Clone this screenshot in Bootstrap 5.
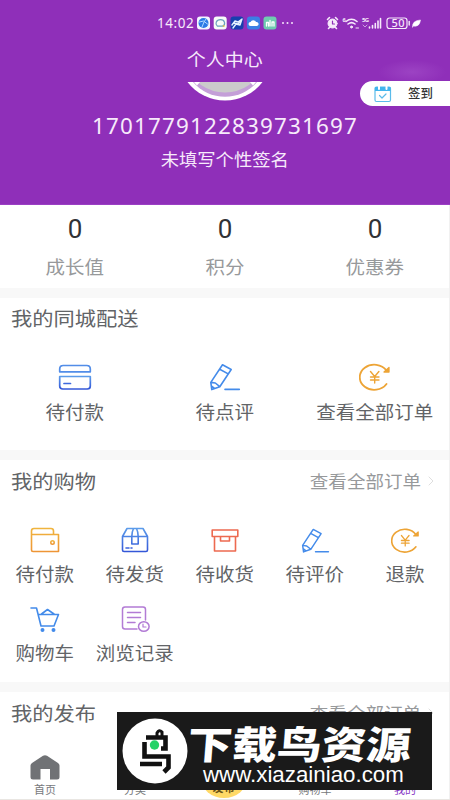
<!DOCTYPE html>
<html lang="zh-CN">
<head>
<meta charset="utf-8">
<meta name="viewport" content="width=device-width, initial-scale=1">
<title>个人中心</title>
<link rel="stylesheet" href="https://cdn.jsdelivr.net/npm/bootstrap@5.3.0/dist/css/bootstrap.min.css">
<style>
body{font-family:"Noto Sans","Noto Sans CJK SC",sans-serif;color:#626467;background:#fff}
.screen{width:450px;height:800px}
.cjk{font-family:"Noto Sans CJK SC",sans-serif}
svg{display:block;fill:none;stroke-linecap:round;stroke-linejoin:round;flex:none}
.wide{display:inline-block;white-space:nowrap;line-height:20px;transform:scaleX(1.09)}
.from-start{transform-origin:left}
.from-end{transform-origin:right}
.hero{height:205px;background:radial-gradient(ellipse 34px 12px at 412px 72px,#9c43c3,#8f2fb9);color:#f7eafb;border-bottom:1px solid #9b3fc4}
.status{height:44px;padding:1px 28px 0 157px}
.clock{font-size:13.5px;letter-spacing:.55px;line-height:20px;width:40px}
.page-title{font-size:17.4px;height:30px}
.avatar{margin-top:8px}
.uid{font-family:"Noto Sans",sans-serif;font-size:22.4px;letter-spacing:1.2px;line-height:30px;margin-top:10px}
.sign{font-size:16.8px;margin-top:8px}
.checkin{right:0;top:81px;width:90px;height:25px;border-radius:13px 0 0 13px;background:#fff;color:#333;padding-left:14px;font-size:12.4px;font-weight:500}
.stats{height:83px;padding-top:9px}
.count{font-family:Roboto,sans-serif;font-size:26px;line-height:30px;color:#303235}
.caption{font-size:17.9px}
.stats .caption{color:#97999b;margin-top:12px}
.gapbar{height:10px;background:#f8f8f8}
.sec-local{height:152px;padding-top:10px}
.heading{font-size:19.5px}
.sec-shop{height:222px;padding-top:11px}
.sec-post{padding-top:11px}
.head-row{padding:0 15px 0 11px;height:20px}
.more{font-size:17px;color:#97999b;margin-right:6px}
.local-row{padding-top:35px}
.local-row svg{margin-bottom:10px}
.shop-grid{padding-top:36px}
.shop-cell{width:90px;height:79px}
.shop-cell svg{margin-bottom:9px}
.tabs{left:0;bottom:0;height:56px;background:#fff;border-bottom:1px solid #e9e6e2;font-size:11px;line-height:14px;color:#77797c}
.tabs .tab{width:90px;padding-bottom:3px}
.tabs svg{margin-bottom:2px}
.hot{width:46px;height:40px;border-radius:50%;background:#ffd966;color:#6b5316;font-weight:700;margin-bottom:1px;padding-bottom:4px;margin-right:3px}
.mine{color:#8737c4}
.brandmark{left:117px;top:712px;width:315px;height:78px;background:#1a1a1a;color:#fff;padding-left:5px}
.brand-name{font-size:38.5px;font-weight:900;line-height:40px;transform:scaleX(1.16) skewX(-4deg);transform-origin:left;white-space:nowrap;margin-top:7px}
.brand-url{font-family:"Liberation Sans",sans-serif;font-size:22.3px;line-height:24px;margin:1px 0 0 15px}
.edge{right:0;top:205px;width:1px;height:594px;background:#f1f1f1}
</style>
</head>
<body>
<svg width="0" height="0" class="position-absolute">
<defs>
<linearGradient id="blue" x1="0" y1="0" x2="0" y2="1"><stop stop-color="#5b9bea"/><stop offset="1" stop-color="#3457d8"/></linearGradient>
<linearGradient id="gold" x1="0" y1="0" x2="0" y2="1"><stop stop-color="#f0b43e"/><stop offset="1" stop-color="#ee9535"/></linearGradient>
<symbol id="refund" viewBox="0 0 32 28"><path d="M27.500 21A14.500 12.600 0 1 1 27.500 7.500" stroke="#eda436" stroke-width="1.800"/><path d="M30 4.500V9H25z" fill="#eda436" stroke="#eda436" stroke-width="1.300"/><path d="M11.500 8.500l4.200 5 4.200-5M15.700 13.500V20M11.500 14H20M11.500 17H20" stroke="#eda436" stroke-width="1.400"/></symbol>
<symbol id="pen" viewBox="0 0 32 28"><path d="M13.500 1.800l8.700 4.700L10.800 23.700 2.800 26.600 1.800 19.400zM10.700 6.200l8.500 4.700M1.800 19.400l4.500.6 4.500 3.700M2.300 23l3.200 2.500M16 26.400h14.300" stroke="#448bea" stroke-width="1.600"/></symbol>
</defs>
</svg>
<main class="screen position-relative overflow-hidden">
<header class="hero position-relative">
  <div class="status d-flex align-items-center">
    <span class="clock">14:02</span>
    <svg width="98" height="14" viewBox="0 0 98 14">
      <rect x="0" y=".5" width="13" height="13" rx="3" fill="#f3f6ff"/><circle cx="6.500" cy="7" r="5" fill="#2b7be6"/><path d="M2.500 6l4-1 4 3M5 11l2-5 2-3" stroke="#b2d8ff"/>
      <rect x="16.700" y=".5" width="13" height="13" rx="3" fill="#f7fbf8"/><path d="M20 9.700c-2-2-1-6 3.500-6s5.500 5 2 6.500h-5" stroke="#6aa1bd" stroke-width="1.200"/><circle cx="26.700" cy="10" r="1" fill="#d4bd52"/>
      <rect x="33.500" y=".5" width="13" height="13" rx="3" fill="#183fae"/><path d="M35 9l3-4 3 1 4-3-2 6-4-1-3 4M37 7l4 1 3-3" stroke="#e5f1ff" stroke-width="1.400"/>
      <rect x="50" y=".5" width="13" height="13" rx="3" fill="#3c7fe4"/><path d="M53.500 10a2 2 0 010-4 3 3 0 015.500 0 2 2 0 011 4z" fill="#fff"/>
      <rect x="66.500" y=".5" width="13" height="13" rx="3" fill="#6fcbb0"/><path d="M69.500 10V6.500h2V10M73 10V4.500M75 10V6h2v4" stroke="#fff" stroke-width="1.300"/>
      <g fill="#f4e5fa"><circle cx="86" cy="7" r="1"/><circle cx="90.500" cy="7" r="1"/><circle cx="95" cy="7" r="1"/></g>
    </svg>
    <svg class="ms-auto" width="96" height="14" viewBox="0 0 96 14" stroke="#f6e9fb">
      <circle cx="6.500" cy="7.500" r="4.500" fill="#f6e9fb"/><path d="M1.500 3.500l2-2M9.500 1.500l2 2M2.500 12.500l1-1M10.500 12.500l-1-1" stroke-width="1.600"/><path d="M6.500 5v3h2" stroke="#8f2fb9" stroke-width="1.200"/>
      <path d="M20 5.500q5.500-4.500 11 0M22 8q3.500-2.800 7 0" stroke-width="1.600"/><circle cx="25.500" cy="11" r="1" fill="#f6e9fb"/><path d="M30 12h2.500" stroke-width="1"/>
      <g fill="#f6e9fb" stroke="none" font-family="Noto Sans" font-weight="700"><text x="16.500" y="5.500" font-size="5.500">6</text><text x="36" y="6" font-size="6" textLength="7">5G</text><text x="65.500" y="11.300" font-size="11" textLength="13" font-weight="500">50</text></g>
      <path d="M43.500 11v1M46.500 9.500V12M49.300 7.500V12M52 5V12M54.500 2.500V12" stroke-width="1.600"/><path d="M37 9l2 2 2-2" stroke-width=".6"/>
      <rect x="61" y="2" width="20" height="10.500" rx="2.500" stroke-width="1.200"/><path d="M83.200 5.500v3.500" stroke-width="1.400"/>
      <path d="M86.500 11q-.5-6.500 8-7-1 7.500-7 6z" fill="#fff" stroke-width=".6"/>
    </svg>
  </div>
  <div class="d-flex flex-column align-items-center cjk">
    <div class="page-title d-flex align-items-center"><span class="wide">个人中心</span></div>
    <svg class="avatar" width="76" height="19" viewBox="0 0 76 19"><path d="M.5 0H75.500A46 44 0 01.5 0z" fill="#fff"/><path d="M6 0H70A42 42 0 016 0z" fill="#c49fd8"/><path d="M11 0H65l-3 3A41 39 0 0114 3z" fill="#cbcbcb"/><path d="M7 0H13L10 3.500zM69 0H63L66 3.500z" fill="#fff"/></svg>
    <div class="uid">1701779122839731697</div>
    <div class="sign wide">未填写个性签名</div>
  </div>
  <div class="checkin cjk position-absolute d-flex align-items-center">
    <svg width="18" height="18" viewBox="0 0 18 18"><rect x="1" y="2" width="15.500" height="14.500" rx="1.500" stroke="#5bbbea" stroke-width="1.200"/><path d="M1 2h15.500v4H1z" fill="#42b5ee"/><path d="M5 1v3M12.500 1v3" stroke="#fff" stroke-width="2"/><path d="M5.500 10.500l2.500 2.500 4-4" stroke="#5bbbea" stroke-width="1.200"/></svg>
    <span class="ms-3">签到</span>
  </div>
</header>

<section class="stats d-flex text-center cjk">
  <div class="col-4"><div class="count">0</div><span class="caption wide">成长值</span></div>
  <div class="col-4"><div class="count">0</div><span class="caption wide">积分</span></div>
  <div class="col-4"><div class="count">0</div><span class="caption wide">优惠券</span></div>
</section>
<div class="gapbar"></div>

<section class="sec-local cjk">
  <div class="head-row d-flex"><span class="heading wide from-start">我的同城配送</span></div>
  <div class="local-row d-flex">
    <div class="col-4 d-flex flex-column align-items-center">
      <svg width="34" height="28" viewBox="0 0 34 28" stroke="url(#blue)" stroke-width="1.700"><path d="M1.700 8.800V6q0-3.500 3.500-3.500h23.600q3.500 0 3.500 3.500v2.800z" stroke="#528de8"/><path d="M1.700 13.500h30.600V23q0 3-3 3H4.700q-3 0-3-3z"/><path d="M6 20.500h6.500" stroke="#3e69dd"/></svg>
      <span class="caption wide">待付款</span></div>
    <div class="col-4 d-flex flex-column align-items-center">
      <svg width="32" height="28"><use href="#pen"/></svg>
      <span class="caption wide">待点评</span></div>
    <div class="col-4 d-flex flex-column align-items-center">
      <svg width="32" height="28"><use href="#refund"/></svg>
      <span class="caption wide">查看全部订单</span></div>
  </div>
</section>
<div class="gapbar"></div>

<section class="sec-shop cjk">
  <div class="head-row d-flex justify-content-between"><span class="heading wide from-start">我的购物</span>
    <div class="d-flex align-items-center"><span class="more wide from-end">查看全部订单</span><svg width="8" height="10" viewBox="0 0 8 10"><path d="M2 1l4 4-4 4" stroke="#dedede"/></svg></div></div>
  <div class="shop-grid d-flex flex-wrap">
    <div class="shop-cell d-flex flex-column align-items-center"><svg width="30" height="27" viewBox="0 0 30 27" stroke="url(#gold)" stroke-width="1.600"><path d="M1.500 7.500V4Q1.500 1.500 4 1.500H21Q23.500 1.500 23.500 4V7.500M1.500 7.500H28.500V24.500H3q-1.500 0-1.500-1.500z"/><circle cx="22.500" cy="15.500" r="1.700"/></svg><span class="caption wide">待付款</span></div>
    <div class="shop-cell d-flex flex-column align-items-center"><svg width="28" height="27" viewBox="0 0 28 27" stroke="url(#blue)" stroke-width="1.600"><path d="M6 1.500H22L26.500 9.500V23q0 1.500-1.500 1.500H3q-1.500 0-1.500-1.500V9.500zM1.500 9.500H26.500M12.500 1.500Q10.800 5 10.800 9.500V17h6.400V9.500Q17.200 5 15.500 1.500M5 21h3M10 21h1"/></svg><span class="caption wide">待发货</span></div>
    <div class="shop-cell d-flex flex-column align-items-center"><svg width="28" height="27" viewBox="0 0 28 27" stroke="#ed6a50" stroke-width="1.600"><path d="M1.200 3H26.800V9.500H1.200zM3.500 9.500V24H24.500V9.500M9.500 9.500V14H18.500V9.500"/></svg><span class="caption wide">待收货</span></div>
    <div class="shop-cell d-flex flex-column align-items-center"><svg width="29" height="27" viewBox="0 0 32 28"><use href="#pen"/></svg><span class="caption wide">待评价</span></div>
    <div class="shop-cell d-flex flex-column align-items-center"><svg width="29" height="27" viewBox="0 0 32 28"><use href="#refund"/></svg><span class="caption wide">退款</span></div>
    <div class="shop-cell d-flex flex-column align-items-center"><svg width="30" height="27" viewBox="0 0 30 27" stroke="#438bea" stroke-width="1.600"><path d="M1 2H6.500L11 20H24L28.500 8.500H8.500M11.500 8l6-4.500L24 8"/><circle cx="12.500" cy="24" r="1.200" fill="#438bea"/><circle cx="23.500" cy="24" r="1.200" fill="#438bea"/></svg><span class="caption wide">购物车</span></div>
    <div class="shop-cell d-flex flex-column align-items-center"><svg width="29" height="27" viewBox="0 0 29 27" stroke="#b27bd5" stroke-width="1.500"><path d="M16 23H4Q1.500 23 1.500 20.500V3.500Q1.500 1 4 1H22Q24.500 1 24.500 3.500V14M6.500 6.500H19.500M6.500 11.500H19.500M6.500 16.500H14"/><ellipse cx="22.800" cy="20.500" rx="5.300" ry="4.800"/><path d="M22 18v3h3" stroke-width="1.200"/></svg><span class="caption wide">浏览记录</span></div>
  </div>
</section>
<div class="gapbar"></div>

<section class="sec-post cjk">
  <div class="head-row d-flex justify-content-between"><span class="heading wide from-start">我的发布</span>
    <div class="d-flex align-items-center"><span class="more wide from-end">查看全部订单</span><svg width="8" height="10" viewBox="0 0 8 10"><path d="M2 1l4 4-4 4" stroke="#dedede"/></svg></div></div>
</section>

<nav class="tabs cjk position-absolute w-100 d-flex align-items-end">
  <div class="tab d-flex flex-column align-items-center"><svg width="30" height="25" viewBox="0 0 30 25"><path d="M13 .8q2-1.200 4 0L28 8q1.500 1 1.500 2.500V22q0 2.500-2.500 2.500h-7V14h-9.500v10.500H3Q.5 24.500.5 22V10.500Q.5 9 2 8z" fill="#707275"/></svg><span>首页</span></div>
  <div class="tab text-center">分类</div>
  <div class="tab d-flex justify-content-center pb-0"><div class="hot d-flex align-items-end justify-content-center">发布</div></div>
  <div class="tab text-center">购物车</div>
  <div class="tab text-center mine">我的</div>
</nav>
<div class="edge position-absolute"></div>

<div class="brandmark cjk position-absolute d-flex align-items-center">
  <svg width="66" height="66" viewBox="0 0 66 66"><circle cx="33" cy="33" r="32.500" fill="#fff"/><g stroke="#111" stroke-width="4.600" stroke-linecap="butt" stroke-linejoin="miter"><path d="M24 19.500H43.500V30.500H39M22.500 24V38.500H46.500V49.500L42 54M18 46H40"/><path d="M35 18v-3q2-4 5-1v4" stroke-width="3"/></g><circle cx="32.500" cy="27" r="4.700" fill="#25d267"/></svg>
  <div><div class="brand-name">下载鸟资源</div><div class="brand-url">www.xiazainiao.com</div></div>
</div>
</main>
<script src="https://cdn.jsdelivr.net/npm/bootstrap@5.3.0/dist/js/bootstrap.bundle.min.js"></script>
</body>
</html>
